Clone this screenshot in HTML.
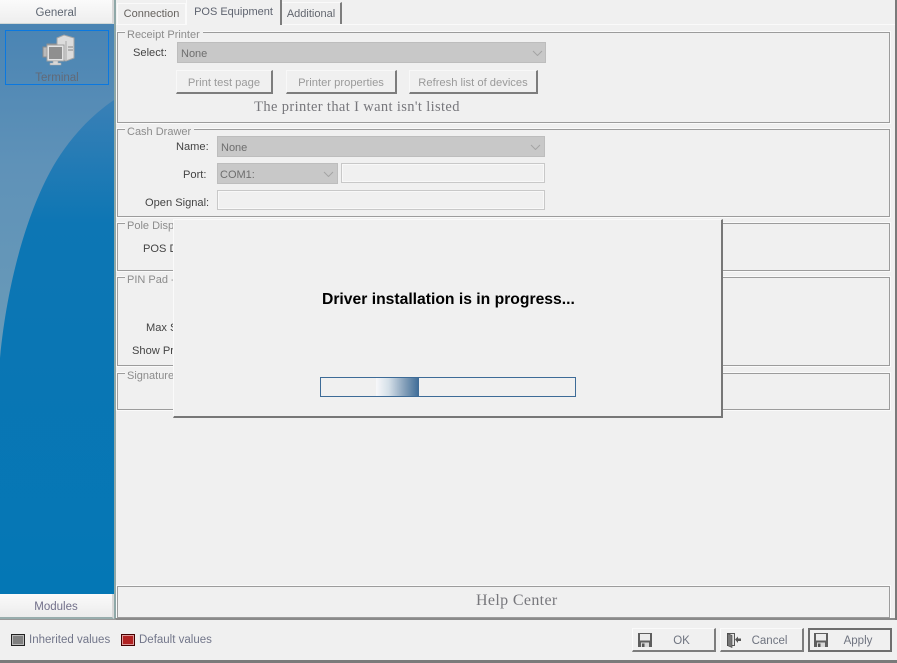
<!DOCTYPE html>
<html><head><meta charset="utf-8"><style>
html,body{margin:0;padding:0;width:897px;height:663px;overflow:hidden;background:#f0f0f0}
body{position:relative;font:11px/14px "Liberation Sans",sans-serif;color:#333}
.a{position:absolute;box-sizing:border-box;white-space:nowrap}
.gb{position:absolute;box-sizing:border-box;left:117px;width:773px;border:1px solid #9c9c9c;box-shadow:0 0 0 1px #fafafa}
.lg{position:absolute;box-sizing:border-box;left:125px;background:#f0f0f0;color:#8c8c8c;padding:0 3px 0 2px;white-space:nowrap;height:13px;line-height:14px;font-size:11px}
.lb{position:absolute;white-space:nowrap;color:#444;font-size:11.100px;line-height:14px;text-align:right;margin-top:1px}
.cb{position:absolute;box-sizing:border-box;background:#c8c8c8;border:1px solid #bdbdbd;color:#6e6e6e;font-size:11px;padding:4px 3px 2px;line-height:14px}
.tx{position:absolute;box-sizing:border-box;background:#f0f0f0;border:1px solid #c8c8c8;box-shadow:inset 0 0 0 1px #f8f8f8}
.btn{position:absolute;box-sizing:border-box;height:24px;top:70px;background:#f0f0f0;border:1px solid #f8f8f8;border-right:2px solid #7d7d7d;border-bottom:2px solid #7d7d7d;color:#9a9a9a;text-align:center;font-size:11.200px;line-height:24px}
.bb{position:absolute;box-sizing:border-box;height:24px;top:628px;background:#f0f0f0;border:1px solid #fafafa;border-right:2px solid #7d7d7d;border-bottom:2px solid #7d7d7d;color:#6f7480;font-size:11.500px;line-height:24px}
.tab{position:absolute;box-sizing:border-box;text-align:center;color:#666;background:#f0f0f0;font-size:11px}
svg{position:absolute;display:block}
.ar{position:absolute;width:11px;height:6px}
</style></head><body>

<div class="a" style="left:0;top:0;width:114px;height:24px;background:linear-gradient(#fbfbfb,#eeeeee);border-right:2px solid #d8d8d8;border-bottom:1px solid #d0d8d8;text-align:center;line-height:27px;color:#5e6672;font-size:11.500px">General</div>

<svg style="left:0;top:24px" width="114" height="570" viewBox="0 0 114 570">
<defs><linearGradient id="g1" x1="0" y1="0" x2="0" y2="1"><stop offset="0" stop-color="#4a84b3"/><stop offset=".25" stop-color="#5f92b8"/><stop offset=".6" stop-color="#6a9bb8"/></linearGradient>
<linearGradient id="g2" x1="0" y1="0" x2="0" y2="1"><stop offset="0" stop-color="#3a80b6"/><stop offset=".25" stop-color="#0d76b4"/><stop offset="1" stop-color="#0477b5"/></linearGradient></defs>
<rect width="114" height="570" fill="url(#g1)"/>
<path d="M114 76C90 92 66 118 50 148C30 185 8 250 0 334V570H114Z" fill="url(#g2)"/>
</svg>
<div class="a" style="left:5px;top:30px;width:104px;height:55px;border:1px solid #0a78e0"></div>

<svg style="left:41px;top:33px" width="36" height="36" viewBox="0 0 36 36">
<path d="M2 14h10v10H2z" fill="#b9b9b9" stroke="#8a8a8a"/>
<path d="M6 11h10v10H6z" fill="#c4c4c4" stroke="#8f8f8f"/>
<path d="M16 5l7-3 10 3v20l-8 3-9-3z" fill="#dcdcdc" stroke="#a5a5a5"/>
<path d="M25 8v19" stroke="#a8a8a8" fill="none"/>
<path d="M27 14h5M27 17h5" stroke="#888" fill="none"/>
<rect x="6" y="12" width="17" height="16" fill="#e4e4e4" stroke="#9f9f9f"/>
<rect x="8" y="14" width="13" height="12" fill="#8f8f8f"/>
<path d="M12 28h5v2h3v2H9v-2h3z" fill="#d8d8d8" stroke="#a5a5a5" stroke-width=".6"/>
</svg>
<div class="a" style="left:5px;top:71px;width:104px;text-align:center;color:#626a78;font-size:11.500px">Terminal</div>

<div class="a" style="left:0;top:594px;width:114px;height:25px;background:linear-gradient(#fafafa,#ececec);border-right:2px solid #d8d8d8;border-bottom:2px solid #98adad;text-align:center;line-height:27px;color:#72708a;font-size:11.500px">Modules</div>
<div class="a" style="left:114px;top:0;width:2px;height:620px;background:#8fa8a8"></div>

<!-- tabs -->
<div class="a" style="left:116px;top:24px;width:779px;height:1px;background:#fafafa"></div>
<div class="tab" style="left:117px;top:3px;width:69px;height:21px;border:1px solid #fafafa;border-bottom:0;line-height:21px;color:#66625e">Connection</div>
<div class="tab" style="left:186px;top:0;width:96px;height:25px;border-right:2px solid #7d7d7d;border-left:1px solid #fafafa;line-height:25px;color:#5f6470">POS Equipment</div>
<div class="tab" style="left:282px;top:2px;width:60px;height:22px;border-right:2px solid #7d7d7d;border-top:1px solid #fafafa;line-height:23px;color:#62666e">Additional</div>

<!-- Receipt -->
<div class="gb" style="top:32px;height:91px"></div>
<div class="lg" style="top:28px">Receipt Printer</div>
<div class="lb" style="left:133px;top:45px">Select:</div>
<div class="cb" style="left:177px;top:42px;width:369px;height:21px">None</div>
<svg class="ar" style="left:532px;top:50px"><path d="M1 1l4.500 4.500L10 1" fill="none" stroke="#a4a4a4"/></svg>
<div class="btn" style="left:176px;width:97px">Print test page</div>
<div class="btn" style="left:286px;width:111px">Printer properties</div>
<div class="btn" style="left:409px;width:129px">Refresh list of devices</div>
<div class="a" style="left:117px;top:99px;width:480px;text-align:center;font:14.500px/16px 'Liberation Serif',serif;color:#77777c;letter-spacing:.36px">The printer that I want isn't listed</div>

<!-- Cash -->
<div class="gb" style="top:129px;height:88px"></div>
<div class="lg" style="top:125px">Cash Drawer</div>
<div class="lb" style="left:176px;top:139px">Name:</div>
<div class="cb" style="left:217px;top:136px;width:328px;height:21px">None</div>
<svg class="ar" style="left:530px;top:144px"><path d="M1 1l4.500 4.500L10 1" fill="none" stroke="#a4a4a4"/></svg>
<div class="lb" style="left:183px;top:167px">Port:</div>
<div class="cb" style="left:217px;top:163px;width:121px;height:21px;padding-left:2px">COM1:</div>
<svg class="ar" style="left:323px;top:171px"><path d="M1 1l4.500 4.500L10 1" fill="none" stroke="#a4a4a4"/></svg>
<div class="tx" style="left:341px;top:163px;width:204px;height:20px"></div>
<div class="lb" style="left:145px;top:195px">Open Signal:</div>
<div class="tx" style="left:217px;top:190px;width:328px;height:20px"></div>

<!-- Pole / PIN / Sig -->
<div class="gb" style="top:223px;height:48px"></div>
<div class="lg" style="top:219px">Pole Display</div>
<div class="lb" style="left:143px;top:241px">POS Display:</div>
<div class="gb" style="top:277px;height:89px"></div>
<div class="lg" style="top:273px">PIN Pad -</div>
<div class="lb" style="left:146px;top:320px">Max Sign:</div>
<div class="lb" style="left:132px;top:343px">Show Prompt:</div>
<div class="gb" style="top:373px;height:37px"></div>
<div class="lg" style="top:369px">Signature</div>

<!-- Help -->
<div class="gb" style="top:586px;height:32px"></div>
<div class="a" style="left:476px;top:593px;font:16px/16px 'Liberation Serif',serif;color:#77777c;letter-spacing:.35px">Help Center</div>

<!-- Modal -->
<div class="a" style="left:173px;top:219px;width:550px;height:199px;background:#f0f0f0;border-right:2px solid #777;border-bottom:2px solid #777;border-left:1px solid #fafafa;border-top:1px solid #fafafa"></div>
<div class="a" style="left:322px;top:291px;font-weight:bold;font-size:15.700px;line-height:17px;color:#000">Driver installation is in progress...</div>
<div class="a" style="left:320px;top:377px;width:256px;height:20px;border:1px solid #3d6b97;background:#f0f0f0"></div>
<div class="a" style="left:376px;top:378px;width:43px;height:18px;background:linear-gradient(90deg,#f8f8fa,#d4dfe8 30%,#7d9ab5 70%,#3d6b97)"></div>

<!-- Bottom -->
<div class="a" style="left:115px;top:618px;width:782px;height:2px;background:#8a8a8a"></div>
<div class="a" style="left:895px;top:0;width:2px;height:620px;background:#7a7a7a"></div>
<div class="a" style="left:0;top:619px;width:116px;height:1px;background:#9a9a9a"></div>
<div class="a" style="left:0;top:660px;width:897px;height:3px;background:#7a7a7a"></div>

<div class="a" style="left:11px;top:634px;width:14px;height:12px;background:#808080;border:1px solid #222;box-shadow:inset 0 0 0 1px #bbb"></div>
<div class="a" style="left:29px;top:633px;color:#72768a;font-size:11.500px">Inherited values</div>
<div class="a" style="left:121px;top:634px;width:14px;height:12px;background:#b22222;border:1px solid #400;box-shadow:inset 0 0 0 1px #d99"></div>
<div class="a" style="left:139px;top:633px;color:#72768a;font-size:11.500px">Default values</div>

<div class="bb" style="left:632px;width:84px;text-align:center;padding-left:16px">OK</div>
<div class="bb" style="left:720px;width:84px;text-align:center;padding-left:16px">Cancel</div>
<div class="bb" style="left:808px;width:84px;text-align:center;padding-left:16px;border:2px solid #6e6e6e;line-height:23px">Apply</div>

<svg style="left:638px;top:633px" width="14" height="14" viewBox="0 0 14 14"><path d="M0 0h14v14H0z" fill="#5e5e5e"/><path d="M2 1h10v6.500H2z" fill="#ececec"/><path d="M3 9.500h8V14H3z" fill="#d8d8d8"/><path d="M4 10.500h2.500V14H4z" fill="#555"/></svg>
<svg style="left:726px;top:633px" width="16" height="15" viewBox="0 0 16 15"><path d="M1.500 .5h7v12h-7z" fill="#e6e6e6" stroke="#555"/><path d="M1.500 .5l4.500 2v12l-4.500-2z" fill="#777" stroke="#444" stroke-width=".6"/><path d="M9 6.500l3-3v2h3v2.500h-3v2z" fill="#555"/></svg>
<svg style="left:814px;top:633px" width="14" height="14" viewBox="0 0 14 14"><path d="M0 0h14v14H0z" fill="#5e5e5e"/><path d="M2 1h10v6.500H2z" fill="#ececec"/><path d="M3 9.500h8V14H3z" fill="#d8d8d8"/><path d="M4 10.500h2.500V14H4z" fill="#555"/></svg>

</body></html>
